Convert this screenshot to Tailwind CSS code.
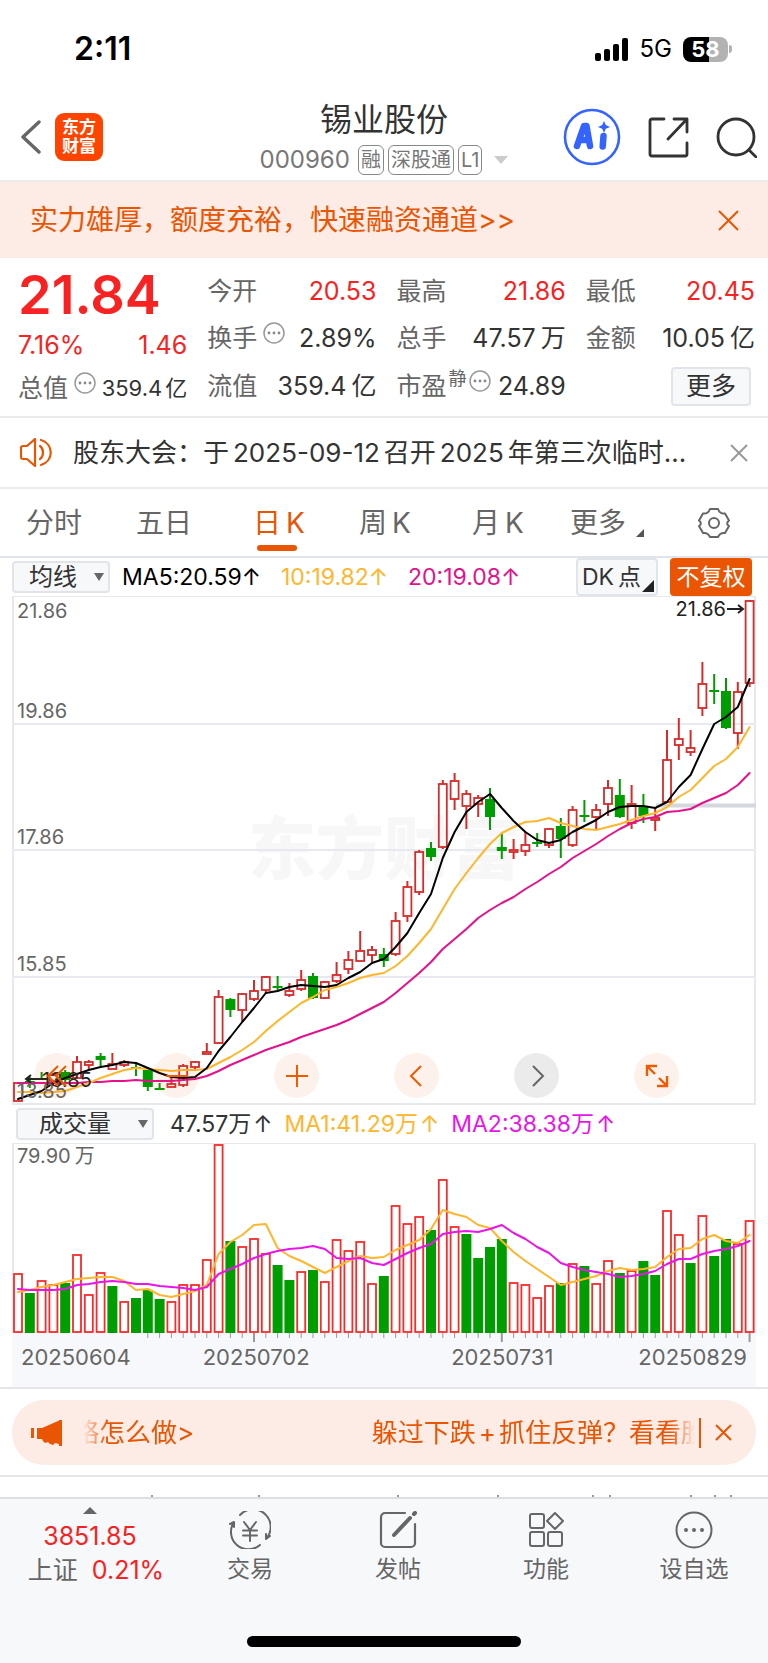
<!DOCTYPE html>
<html lang="zh-CN">
<head>
  <meta charset="UTF-8" />
  <meta name="viewport" content="width=device-width, initial-scale=1.0" />
  <title>锡业股份 000960</title>
  <script src="https://cdn.jsdelivr.net/npm/@tailwindcss/browser@4"></script>
</head>
<body class="bg-white text-[#333] font-['Inter','Noto_Sans_CJK_SC',sans-serif]">
  <div class="flex min-h-screen flex-col">

    <!-- status bar -->
    <div class="flex h-[98px] items-center justify-between pl-[74px] pr-9 text-black">
      <span class="text-[32px] font-semibold leading-none">2:11</span>
      <div class="flex items-center gap-[11px]">
        <svg class="h-[23px] w-[34px]" viewBox="0 0 34 23">
          <rect x="0" y="15" width="6" height="8" rx="2" />
          <rect x="9" y="11" width="6" height="12" rx="2" />
          <rect x="18" y="6" width="6" height="17" rx="2" />
          <rect x="27" y="0" width="6" height="23" rx="2" />
        </svg>
        <span class="text-2xl leading-none">5G</span>
        <div class="flex items-center gap-px">
          <div class="flex h-[25px] w-[45px] items-center justify-center rounded-lg bg-linear-to-r from-black from-58% to-[#b2b2b2] to-58% text-[22px] font-bold leading-none text-white">58</div>
          <div class="h-2 w-[3px] rounded-r-full bg-[#b2b2b2]"></div>
        </div>
      </div>
    </div>

    <!-- header -->
    <header class="grid h-[84px] grid-cols-[1fr_auto_1fr] items-center border-b-2 border-[#ebebed] px-[11px] pb-1">
      <div class="flex items-center gap-3.5 pl-[9px]">
        <button aria-label="返回">
          <svg class="h-[34px] w-[21px]" viewBox="0 0 21 34" fill="none" stroke="#666" stroke-width="3.4" stroke-linecap="round" stroke-linejoin="round"><path d="M19 2L3 17l16 15" /></svg>
        </button>
        <a href="#" class="flex size-12 flex-col items-center justify-center rounded-[9px] bg-[#ff4400] text-[17px] font-bold leading-[19px] text-white"><span>东方</span><span>财富</span></a>
      </div>
      <div class="flex flex-col items-center gap-2 pt-1">
        <h1 class="text-[32px] leading-[34px]">锡业股份</h1>
        <div class="flex items-center gap-1 text-[#777]">
          <span class="mr-1 text-2xl leading-none">000960</span>
          <span class="rounded-md border border-[#888] px-[2px] text-xl leading-7">融</span>
          <span class="rounded-md border border-[#888] px-[2px] text-xl leading-7">深股通</span>
          <span class="rounded-md border border-[#888] px-[2px] text-xl leading-7">L1</span>
          <svg class="ml-2 h-2 w-[14px]" viewBox="0 0 14 8"><path d="M0 0h14L7 8z" fill="#ccc" /></svg>
        </div>
      </div>
      <div class="flex items-center justify-end gap-[27px]">
        <button aria-label="AI">
          <svg class="size-[58px]" viewBox="0 0 58 58">
            <circle cx="29" cy="29" r="27" fill="none" stroke="#3563ff" stroke-width="2.6" />
            <g fill="none" stroke="#3563ff" stroke-linecap="round" stroke-linejoin="round">
              <path d="M14 38L21 18h2.500L27 38M17 32h8" stroke-width="6.500" />
              <path d="M40.500 28l-.8 10.500" stroke-width="6.500" />
            </g>
            <path d="M41 13l1.800 4L47 19l-4.200 1.800L41 25l-1.800-4.200L35 19l4.200-2z" fill="#3563ff" />
          </svg>
        </button>
        <button aria-label="分享">
          <svg class="size-[41px]" viewBox="0 0 41 41" fill="none" stroke="#333" stroke-width="2.800" stroke-linecap="round" stroke-linejoin="round"><path d="M16 2H4a2 2 0 0 0-2 2v33a2 2 0 0 0 2 2h33a2 2 0 0 0 2-2V26M26 2h13v13M39 2L20 22" /></svg>
        </button>
        <button aria-label="搜索">
          <svg class="size-[41px]" viewBox="0 0 41 41" fill="none" stroke="#333" stroke-width="2.800" stroke-linecap="round"><circle cx="20" cy="20" r="18" /><path d="M33 33l7 7" /></svg>
        </button>
      </div>
    </header>

    <!-- promo -->
    <div class="flex h-[76px] items-center justify-between bg-[#fdece5] pl-[30px] pr-[29px] text-[#ea5504]">
      <a href="#" class="text-[28px] leading-none">实力雄厚，额度充裕，快速融资通道&gt;&gt;</a>
      <button aria-label="关闭">
        <svg class="size-[21px]" viewBox="0 0 21 21" fill="none" stroke="currentColor" stroke-width="2"><path d="M1 1l19 19M20 1L1 20" /></svg>
      </button>
    </div>

    <!-- quote -->
    <section class="grid h-[160px] grid-cols-4 gap-x-5 border-b-2 border-[#ebebed] pb-1.5 pl-[18px] pr-[13px] pt-2.5 text-[25px] leading-none">
      <div class="flex flex-col text-[#f82222]">
        <div class="flex h-[54px] items-center text-[54px] font-semibold">21.84</div>
        <div class="flex h-[46px] items-center justify-between text-[25px]"><span>7.16%</span><span>1.46</span></div>
        <div class="flex h-[40px] items-center justify-between text-[#333]">
          <span class="flex gap-1.5 text-[#666]">总值
            <svg class="-mt-1 size-[22px]" viewBox="0 0 22 22"><circle cx="11" cy="11" r="10" fill="none" stroke="#999" stroke-width="1.500" /><g fill="#888"><circle cx="6" cy="11" r="1.400" /><circle cx="11" cy="11" r="1.400" /><circle cx="16" cy="11" r="1.400" /></g></svg>
          </span>
          <span class="text-[22px]">359.4<span class="ml-[3px]">亿</span></span>
        </div>
      </div>
      <div class="grid grid-rows-3">
        <div class="flex items-center justify-between"><span class="text-[#666]">今开</span><span class="text-[#f82222]">20.53</span></div>
        <div class="flex items-center justify-between">
          <span class="flex gap-1.5 text-[#666]">换手
            <svg class="-mt-1 size-[22px]" viewBox="0 0 22 22"><circle cx="11" cy="11" r="10" fill="none" stroke="#999" stroke-width="1.500" /><g fill="#888"><circle cx="6" cy="11" r="1.400" /><circle cx="11" cy="11" r="1.400" /><circle cx="16" cy="11" r="1.400" /></g></svg>
          </span>
          <span>2.89%</span>
        </div>
        <div class="flex items-center justify-between"><span class="text-[#666]">流值</span><span>359.4<span class="ml-[5px]">亿</span></span></div>
      </div>
      <div class="grid grid-rows-3">
        <div class="flex items-center justify-between"><span class="text-[#666]">最高</span><span class="text-[#f82222]">21.86</span></div>
        <div class="flex items-center justify-between"><span class="text-[#666]">总手</span><span>47.57<span class="ml-[5px]">万</span></span></div>
        <div class="flex items-center justify-between">
          <span class="flex gap-0.5 text-[#666]">市盈<span class="-mt-1 text-lg leading-none">静</span>
            <svg class="-mt-1 size-[22px]" viewBox="0 0 22 22"><circle cx="11" cy="11" r="10" fill="none" stroke="#999" stroke-width="1.500" /><g fill="#888"><circle cx="6" cy="11" r="1.400" /><circle cx="11" cy="11" r="1.400" /><circle cx="16" cy="11" r="1.400" /></g></svg>
          </span>
          <span>24.89</span>
        </div>
      </div>
      <div class="grid grid-rows-3">
        <div class="flex items-center justify-between"><span class="text-[#666]">最低</span><span class="text-[#f82222]">20.45</span></div>
        <div class="flex items-center justify-between"><span class="text-[#666]">金额</span><span>10.05<span class="ml-[5px]">亿</span></span></div>
        <div class="flex items-center justify-end pr-1"><button class="h-[39px] w-20 rounded-sm border-2 border-[#e1e5ea] bg-[#f6f8fa]">更多</button></div>
      </div>
    </section>

    <!-- announcement -->
    <div class="flex h-[71px] items-center border-b-2 border-[#ebebed] pl-5 pr-5">
      <svg class="h-[29px] w-[33px] shrink-0" viewBox="0 0 33 29" fill="none" stroke="#ea5504" stroke-width="2.200" stroke-linecap="round" stroke-linejoin="round"><path d="M15 1v27L7 21H3a2 2 0 0 1-2-2V10a2 2 0 0 1 2-2h4z" /><path d="M20 8c4 3 4 10 0 13M21 2c13 4 13 21 0 25" /></svg>
      <a href="#" class="ml-5 min-w-0 flex-1 truncate text-[26px] leading-9">股东大会：于<span class="mx-1">2025-09-12</span>召开<span class="mx-1">2025</span>年第三次临时...</a>
      <button class="ml-6 text-[#999]" aria-label="关闭公告">
        <svg class="size-[18px]" viewBox="0 0 18 18" fill="none" stroke="currentColor" stroke-width="2"><path d="M1 1l16 16M17 1L1 17" /></svg>
      </button>
    </div>

    <!-- period tabs -->
    <nav class="grid h-[69px] grid-cols-[110fr_117fr_106fr_113fr_98fr_128fr_32fr] items-center justify-items-start border-b-2 border-[#dfe3ea] pl-[26px] pr-[38px] text-[28px] leading-none text-[#666]">
      <button>分时</button>
      <button>五日</button>
      <button class="relative flex gap-[5px] text-[#ea5504]">日<span>K</span><span class="absolute -bottom-3.5 left-1 h-1.5 w-10 rounded-sm bg-[#ea5504]"></span></button>
      <button class="flex gap-[5px]">周<span>K</span></button>
      <button class="flex gap-[5px]">月<span>K</span></button>
      <button class="flex items-end gap-2.5">更多<svg class="size-2" viewBox="0 0 8 8"><path d="M8 0v8H0z" fill="#555" /></svg></button>
      <button aria-label="设置">
        <svg class="size-8" viewBox="0 0 32 32" fill="none" stroke="#666" stroke-width="2" stroke-linejoin="round"><path d="M12 2h8c1.500 4 3.500 5 7 4.500l4 7c-2.500 2-2.500 4 0 5.500l-4 7c-3.500-.5-5.500.5-7 4h-8c-1.500-3.500-3.500-4.500-7-4l-4-7c2.500-1.500 2.500-3.500 0-5.500l4-7c3.500.5 5.500-.5 7-4.500z" /><circle cx="16" cy="16" r="5" /></svg>
      </button>
    </nav>

    <!-- price chart -->
    <div class="flex h-[38px] items-center pl-3 pr-4 text-[23px] leading-none">
      <div class="relative">
        <select aria-label="主图指标" class="h-8 w-[98px] appearance-none rounded-sm border-2 border-[#e1e5ea] bg-[#f6f8fa] pl-[15px] text-2xl leading-none"><option>均线</option></select>
        <svg class="pointer-events-none absolute right-1.5 top-3 h-2 w-2.5" viewBox="0 0 10 8"><path d="M0 0h10L5 8z" fill="#666" /></svg>
      </div>
      <span class="ml-3 text-black">MA5:20.59↑</span>
      <span class="ml-5 text-[#ffb62d]">10:19.82↑</span>
      <span class="ml-5 text-[#e5108c]">20:19.08↑</span>
      <button class="relative ml-auto h-[38px] w-[82px] rounded-sm border-2 border-[#e1e5ea] bg-[#f6f8fa] pl-1 text-left">DK<span class="ml-1">点</span><svg class="absolute bottom-0.5 right-0.5 size-3" viewBox="0 0 12 12"><path d="M12 0v12H0z" fill="#222" /></svg></button>
      <button class="ml-3 h-[38px] w-[82px] rounded-sm bg-[#ea5504] text-white">不复权</button>
    </div>
    <div class="relative mx-3 h-[509px] border-2 border-t border-[#e6e8ee] text-xl leading-none text-[#666]">
      <div class="absolute inset-x-0 top-[216px] text-center text-[68px] font-black leading-[72px] text-[#f7f7f7]">东方财富</div>
      <svg id="priceChart" class="absolute -left-0.5 -top-px h-[509px] w-[calc(100%+4px)]" viewBox="12 596 744 509" preserveAspectRatio="none"></svg>
      <span class="absolute left-[3px] top-1">21.86</span>
      <span class="absolute left-[3px] top-[104px]">19.86</span>
      <span class="absolute left-[3px] top-[230px]">17.86</span>
      <span class="absolute left-[3px] top-[357px]">15.85</span>
      <span class="absolute left-[3px] top-[484px]">13.85</span>
      <span class="absolute right-7 top-0.5 text-[#222]">21.86</span>
      <span class="absolute left-7 top-[473px] text-[#222]">13.85</span>
      <div class="absolute inset-x-5 bottom-[5px] flex gap-[75px]">
        <button class="grid size-[45px] place-items-center rounded-full bg-[#ea5504]/8" aria-label="最早">
          <svg class="size-6" viewBox="0 0 24 24" fill="none" stroke="#f05a00" stroke-width="2"><path d="M13 2L3 12l10 10M21 2L11 12l10 10" /></svg>
        </button>
        <button class="grid size-[45px] place-items-center rounded-full bg-[#ea5504]/8" aria-label="缩小">
          <svg class="size-6" viewBox="0 0 24 24" stroke="#f05a00" stroke-width="2"><path d="M1 12h22" /></svg>
        </button>
        <button class="grid size-[45px] place-items-center rounded-full bg-[#ea5504]/8" aria-label="放大">
          <svg class="size-6" viewBox="0 0 24 24" stroke="#f05a00" stroke-width="2"><path d="M1 12h22M12 1v22" /></svg>
        </button>
        <button class="grid size-[45px] place-items-center rounded-full bg-[#ea5504]/8" aria-label="向左">
          <svg class="size-6" viewBox="0 0 24 24" fill="none" stroke="#f05a00" stroke-width="2"><path d="M16 2L6 12l10 10" /></svg>
        </button>
        <button class="grid size-[45px] place-items-center rounded-full bg-black/8" aria-label="向右">
          <svg class="size-6" viewBox="0 0 24 24" fill="none" stroke="#666" stroke-width="2"><path d="M8 2l10 10L8 22" /></svg>
        </button>
        <button class="grid size-[45px] place-items-center rounded-full bg-[#ea5504]/8" aria-label="全屏">
          <svg class="size-6" viewBox="0 0 24 24" fill="none" stroke="#f05a00" stroke-width="2.400"><path d="M2 12V2h10M2 2l8 8M22 12v10H12M22 22l-8-8" /></svg>
        </button>
      </div>
    </div>

    <!-- volume chart -->
    <div class="flex h-[38px] items-center pl-4 text-[23px] leading-none">
      <div class="relative">
        <select aria-label="副图指标" class="h-8 w-[138px] appearance-none rounded-sm border-2 border-[#e1e5ea] bg-[#f6f8fa] pl-[21px] text-2xl leading-none"><option>成交量</option></select>
        <svg class="pointer-events-none absolute right-1.5 top-3 h-2 w-2.5" viewBox="0 0 10 8"><path d="M0 0h10L5 8z" fill="#666" /></svg>
      </div>
      <span class="ml-4">47.57万<span class="ml-0.5">↑</span></span>
      <span class="ml-3 text-[#ffb62d]">MA1:41.29万<span class="ml-0.5">↑</span></span>
      <span class="ml-3 text-[#e815e8]">MA2:38.38万<span class="ml-0.5">↑</span></span>
    </div>
    <div class="relative mx-3 h-[190px] border-2 border-b-0 border-t border-[#e6e8ee] text-[#666]">
      <svg id="volumeChart" class="absolute -left-0.5 -top-px h-[200px] w-[calc(100%+4px)]" viewBox="12 1143 744 200" preserveAspectRatio="none"></svg>
      <span class="absolute left-[3px] top-0 text-xl leading-6">79.90<span class="ml-1">万</span></span>
    </div>
    <div class="mx-3 flex h-[54px] bg-[#f7f8fb] pl-[9px] pr-[9px] pt-3 text-[22px] leading-6 text-[#666]">
      <span>20250604</span>
      <span class="ml-[72px]">20250702</span>
      <span class="ml-auto">20250731</span>
      <span class="ml-[85px]">20250829</span>
    </div>

    <!-- marquee -->
    <div class="border-y-2 border-[#e6e6ea] px-3 pb-2.5 pt-[11px]">
      <div class="flex h-[65px] items-center rounded-[32px] bg-[#fdece5] pl-[19px] pr-6 text-[26px] leading-9 text-[#ea5504]">
        <svg class="h-[26px] w-8 shrink-0" viewBox="0 0 32 26" fill="#ea5504"><rect x="0" y="8" width="3" height="10" /><path d="M6 8h5L27 1h1V0h3v26h-3v-2l-4-1-2 2-3-1-2-2-3 1-2-2-1-2H6z" /></svg>
        <div class="ml-5 flex min-w-0 flex-1 justify-between overflow-hidden whitespace-nowrap mask-x-from-96% mask-x-to-100%">
          <span class="-ml-2.5">略怎么做&gt;</span>
          <span class="-mr-3">躲过下跌<span class="mx-[3px]">+</span>抓住反弹？看看胜</span>
        </div>
        <div class="mx-1 h-[30px] w-0.5 shrink-0 bg-[#ea5504]"></div>
        <button class="ml-2.5" aria-label="关闭广告">
          <svg class="size-[17px]" viewBox="0 0 17 17" fill="none" stroke="currentColor" stroke-width="2"><path d="M1 1l15 15M16 1L1 16" /></svg>
        </button>
      </div>
    </div>

    <!-- top edge of the section that scrolls under the bottom bar -->
    <div class="flex h-5 items-end">
      <svg class="h-0.5 w-full" viewBox="0 0 768 2" preserveAspectRatio="none"><path d="M151 1h2M258 1h2M397 1h2M497 1h2M592 1h2M609 1h2M690 1h2M714 1h2M730 1h2" stroke="#999" stroke-width="2" /></svg>
    </div>

    <!-- bottom bar -->
    <footer class="flex flex-1 flex-col border-t-2 border-[#dcdfe4] bg-[#f6f8fa] text-[23px] leading-7 text-[#666]">
      <nav class="flex pt-2">
        <a href="#" class="flex w-[176px] flex-col items-center pl-1 text-[25px] leading-8">
          <svg class="h-[7px] w-3.5" viewBox="0 0 14 7"><path d="M0 7h14L7 0z" fill="#666" /></svg>
          <span class="mt-1.5 text-[#f82222]">3851.85</span>
          <span class="mt-0.5 flex gap-3.5 pl-3">上证<span class="text-[#f82222]">0.21%</span></span>
        </a>
        <a href="#" class="flex flex-1 flex-col items-center pt-1">
          <svg class="h-[38px] w-[42px]" viewBox="0 0 42 38" fill="none" stroke="#666" stroke-width="2" stroke-linecap="round" stroke-linejoin="round"><path d="M11 4a17.500 17.500 0 0 1 26 24l4-3M37 28v-5M31 34A17.500 17.500 0 0 1 5 11l-4 2M5 11v5M15 11l6 8 6-8M21 19v11M14 19.500h14M14 24.500h14" /></svg>
          <span class="mt-1.5">交易</span>
        </a>
        <a href="#" class="flex flex-1 flex-col items-center pt-1">
          <svg class="h-[38px] w-[38px]" viewBox="0 0 38 38" fill="none" stroke="#666" stroke-width="2.200" stroke-linecap="round"><path d="M26 2H6a4 4 0 0 0-4 4v26a4 4 0 0 0 4 4h26a4 4 0 0 0 4-4V13" /><path d="M15 24L31 7M35 3l1-1" stroke-width="4" /></svg>
          <span class="mt-1.5">发帖</span>
        </a>
        <a href="#" class="flex flex-1 flex-col items-center pt-1">
          <svg class="h-[38px] w-[38px]" viewBox="0 0 38 38" fill="none" stroke="#666" stroke-width="2"><rect x="3" y="3" width="14" height="14" rx="2" /><rect x="3" y="21" width="14" height="14" rx="2" /><rect x="21" y="21" width="14" height="14" rx="2" /><path d="M28 2l8 8-8 8-8-8z" stroke-linejoin="round" /></svg>
          <span class="mt-1.5">功能</span>
        </a>
        <a href="#" class="flex flex-1 flex-col items-center pt-1">
          <svg class="h-[38px] w-[38px]" viewBox="0 0 38 38"><circle cx="19" cy="19" r="17.500" fill="none" stroke="#666" stroke-width="2" /><g fill="#666"><circle cx="11" cy="19" r="2" /><circle cx="19" cy="19" r="2" /><circle cx="27" cy="19" r="2" /></g></svg>
          <span class="mt-1.5">设自选</span>
        </a>
      </nav>
      <div class="mx-auto mb-4 mt-auto h-[11px] w-[274px] rounded-full bg-black"></div>
    </footer>
  </div>

  <script>
    const STEP = 11.8;
    const x = i => 18 + i * STEP;

    // [up/down, high, body top, body bottom, low]
    const candles = [
      ["r",1083,1083,1101,1101],["g",1077,1081,1083,1088],["g",1072,1078,1079,1080],["r",1073,1075,1081,1082],["g",1070,1072,1080,1082],
      ["r",1056,1062,1078,1079],["r",1060,1062,1065,1069],["g",1053,1056,1060,1066],["r",1053,1064,1069,1069],["r",1060,1062,1065,1067],
      ["g",1063,1067,1068,1076],["g",1070,1070,1087,1091],["g",1083,1088,1089,1090],["r",1078,1084,1087,1087],["r",1064,1066,1085,1087],
      ["r",1061,1062,1067,1069],["r",1043,1052,1054,1054],["r",990,997,1043,1044],["g",998,999,1010,1017],["r",993,994,1010,1022],
      ["r",980,991,999,1001],["r",976,977,990,993],["g",976,986,987,990],["r",983,991,995,997],["r",970,980,989,991],
      ["g",973,976,998,999],["r",981,982,998,999],["r",962,975,981,983],["r",951,960,969,974],["r",931,951,961,961],
      ["r",946,950,955,964],["g",948,954,961,967],["r",912,921,954,956],["r",881,887,916,922],["r",850,852,892,895],
      ["g",842,848,857,861],["r",780,784,847,849],["r",773,781,799,810],["r",790,794,806,829],["r",795,798,804,817],
      ["g",788,799,817,830],["g",833,847,851,859],["r",839,850,852,859],["r",832,845,851,856],["g",833,842,843,847],
      ["r",829,829,845,848],["g",818,826,839,858],["r",806,810,845,847],["g",800,815,816,822],["r",804,810,817,829],
      ["r",780,788,804,816],["g",779,795,817,818],["r",785,804,823,829],["g",794,806,816,823],["r",808,818,820,831],
      ["r",730,760,802,803],["r",718,739,745,760],["r",730,748,752,756],["r",662,684,708,716],["g",674,690,691,704],
      ["g",678,691,728,729],["r",682,692,733,749],["r",600,601,683,687]
    ];
    const ma5 = [1099,1095,1091,1083,1078,1074,1070,1067,1065,1062,1063,1068,1073,1077,1078,1077,1068,1051,1037,1022,1008,993,991,987,985,986,987,985,978,972,963,959,947,933,913,894,858,832,812,802,794,808,821,832,840,843,840,832,826,820,812,807,806,806,808,802,787,775,749,724,717,707,679];
    const ma10 = [1092,1092,1093,1092,1091,1087,1083,1078,1074,1070,1068,1069,1070,1071,1070,1070,1069,1063,1057,1050,1042,1031,1021,1012,1003,997,990,987,983,978,975,973,966,956,943,929,909,889,873,858,844,833,827,822,821,818,823,826,829,830,827,824,820,816,813,807,797,790,778,766,759,747,727];
    const ma20 = [1083,1083,1083,1083,1083,1083,1082,1082,1081,1081,1080,1081,1081,1081,1080,1079,1076,1071,1065,1060,1055,1050,1046,1042,1037,1033,1029,1025,1020,1014,1008,1002,993,983,973,962,949,939,929,918,910,903,897,889,882,874,867,858,851,844,836,829,823,819,817,812,811,809,803,798,793,785,773];

    const volumes = [
      "r1273","g1293","r1280","r1284","g1283","r1254","r1294","r1272","g1286","r1301","g1298","g1290","g1299","r1301","r1284","r1284",
      "r1259","r1144","g1241","r1246","r1238","r1253","g1265","g1280","r1271","g1270","r1281","r1239","r1250","r1241","r1283","g1276",
      "r1205","r1223","r1216","g1230","r1179","r1226","g1234","g1258","g1247","g1239","r1282","r1284","r1297","r1285","g1283","r1263",
      "g1266","r1283","r1260","g1273","r1270","g1261","g1275","r1210","r1234","g1263","r1215","g1256","g1239","r1243","r1220"
    ];
    const vma1 = [1292,1290,1287,1285,1282,1279,1278,1277,1277,1281,1290,1289,1295,1297,1294,1291,1285,1254,1242,1235,1225,1224,1248,1256,1261,1267,1273,1267,1261,1256,1258,1257,1250,1245,1240,1229,1210,1214,1217,1225,1228,1241,1252,1261,1269,1277,1285,1282,1279,1276,1271,1268,1270,1269,1267,1257,1249,1248,1239,1235,1241,1243,1235];
    const vma2 = [1289,1290,1290,1290,1289,1285,1284,1282,1281,1282,1284,1284,1286,1287,1288,1290,1287,1274,1269,1264,1258,1254,1251,1249,1248,1246,1249,1258,1259,1258,1263,1265,1259,1253,1248,1244,1234,1232,1231,1232,1229,1225,1233,1239,1247,1253,1263,1267,1270,1272,1274,1277,1276,1274,1271,1264,1259,1259,1254,1251,1249,1246,1241];

    const line = (ys, color) =>
      `<polyline points="${ys.map((y, i) => x(i) + "," + y).join(" ")}" fill="none" stroke="${color}" stroke-width="2" stroke-linejoin="round" stroke-linecap="round"/>`;

    function drawPrice() {
      let s = "";
      [724, 850, 977].forEach(y => {
        s += `<path d="M12 ${y}H756" stroke="#e6e9f0" stroke-width="2"/>`;
      });
      s += `<path d="M656 805.500H756" stroke="#d4d7de" stroke-width="4"/>`;
      candles.forEach(([dir, high, top, bottom, low], i) => {
        const cx = x(i);
        if (dir === "g") {
          s += `<path d="M${cx} ${high}V${low}" stroke="#009d00" stroke-width="2"/>`;
          s += `<rect x="${cx - 5}" y="${top}" width="10" height="${Math.max(bottom - top, 2)}" fill="#009d00"/>`;
        } else {
          s += `<path d="M${cx} ${high}V${top}M${cx} ${bottom}V${low}" stroke="#d62b2b" stroke-width="2"/>`;
          s += `<rect x="${cx - 4}" y="${top}" width="8" height="${bottom - top}" fill="none" stroke="#d62b2b" stroke-width="1.800"/>`;
        }
      });
      s += line(ma20, "#e5108c") + line(ma10, "#ffb62d") + line(ma5, "#000");
      // high / low markers
      s += `<path d="M727 609H743M738 605l5 4-5 4M47 1079H26M31 1075l-5 4 5 4" fill="none" stroke="#222" stroke-width="2"/>`;
      document.getElementById("priceChart").innerHTML = s;
    }

    function drawVolume() {
      let s = "";
      volumes.forEach((v, i) => {
        const cx = x(i), y = Number(v.slice(1));
        if (v[0] === "g") s += `<rect x="${cx - 5}" y="${y}" width="10" height="${1333 - y}" fill="#009d00"/>`;
        else s += `<rect x="${cx - 4}" y="${y + 1}" width="8" height="${1331 - y}" fill="none" stroke="#f92a2a" stroke-width="1.800"/>`;
      });
      s += line(vma1, "#ffb62d") + line(vma2, "#e815e8");
      for (let i = 11; i < volumes.length; i++) {
        const major = i % 21 === 20;
        s += `<path d="M${x(i)} 1333V${major ? 1342 : 1338}" stroke="#999" stroke-width="${major ? 2 : 1}"/>`;
      }
      document.getElementById("volumeChart").innerHTML = s;
    }

    drawPrice();
    drawVolume();
  </script>
</body>
</html>
